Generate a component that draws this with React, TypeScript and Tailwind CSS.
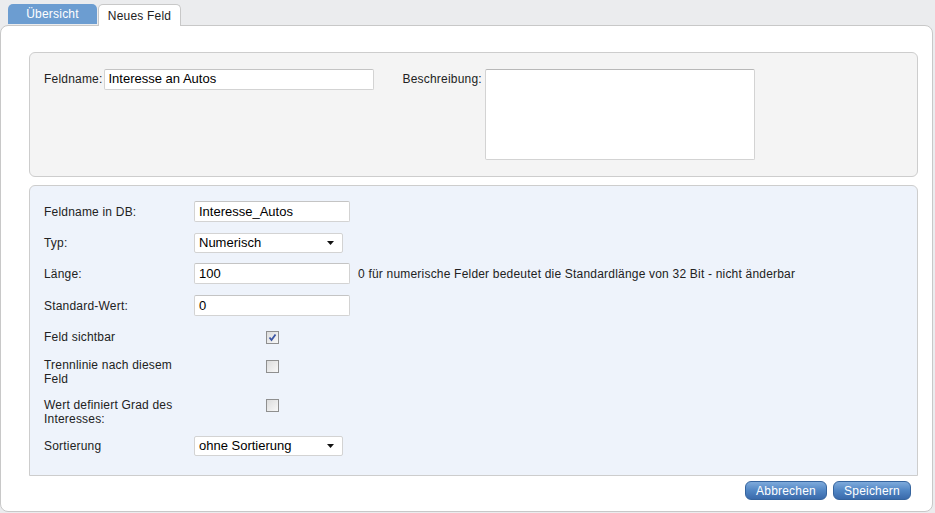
const labelFont = { fontFamily: '"Liberation Sans", Arial, sans-serif' };

function TextInput({ value, w }: { value: string; w: string }) {
  return (
    <div
      className={`${w} h-[21px] flex items-center px-[4px] bg-white border border-[#d3d3d3] border-t-[#c4c4c4] rounded-[2px] text-[13px] tracking-normal text-black`}
    >
      {value}
    </div>
  );
}

function Select({ value }: { value: string }) {
  return (
    <div className="w-[149px] h-[20px] flex items-center justify-between pl-[4px] pr-[8px] bg-white border border-[#d3d3d3] rounded-[2px] text-[13px] tracking-normal text-black">
      <span>{value}</span>
      <svg width="7" height="4" viewBox="0 0 7 4">
        <path d="M0 0h7L3.5 4z" fill="#111" />
      </svg>
    </div>
  );
}

function Checkbox({ checked = false }: { checked?: boolean }) {
  return (
    <div className="w-[13px] h-[13px] border border-[#8f8f8f] bg-gradient-to-br from-[#dcdcdc] to-[#f8f8f8] flex items-center justify-center">
      {checked && (
        <svg width="9" height="9" viewBox="0 0 9 9">
          <path d="M1.5 4.5 L3.5 7 L7.5 1.5" fill="none" stroke="#3b55a4" strokeWidth="1.8" />
        </svg>
      )}
    </div>
  );
}

function Button({ children, w }: { children: string; w: string }) {
  return (
    <button
      className={`${w} h-[19px] rounded-[6px] border border-[#35649e] bg-gradient-to-b from-[#7eaadb] via-[#5186c4] to-[#3a6aab] text-white text-[12px] leading-none flex items-center justify-center`}
    >
      {children}
    </button>
  );
}

export default function App() {
  return (
    <div className="w-[935px] h-[513px] bg-[#ebecee] text-[12px] tracking-[0.2px] text-[#222]" style={labelFont}>
      {/* Tabs */}
      <div className="flex items-end h-[25px] pl-[8px]">
        <div className="w-[89px] h-[20px] mb-[1px] bg-[#6c9dd1] rounded-t-[5px] text-white flex items-center justify-center">
          Übersicht
        </div>
        <div className="relative z-10 w-[83px] h-[22px] -mb-[1px] ml-[1px] bg-white border border-b-0 border-[#c8c8c8] rounded-t-[5px] flex items-center justify-center text-[#222]">
          Neues Feld
        </div>
      </div>

      {/* Main panel */}
      <div className="w-[933px] h-[487px] bg-white border border-[#c8c8c8] rounded-[8px] pt-[26px] px-[28px]">
        {/* Section 1 */}
        <div className="w-[889px] h-[125px] bg-[#f4f4f4] border border-[#cdcdcd] rounded-[6px] pt-[15px] pl-[14px] flex">
          <div className="flex items-center gap-[1px] h-[22px]">
            <span>Feldname:</span>
            <TextInput value="Interesse an Autos" w="w-[270px]" />
          </div>
          <div className="flex items-start ml-[29px] pt-[1px]">
            <span className="mt-[1px] w-[82px]">Beschreibung:</span>
            <div className="w-[270px] h-[91px] bg-white border border-[#d3d3d3] border-t-[#b8b8b8] rounded-[2px]" />
          </div>
        </div>

        {/* Section 2 */}
        <div className="w-[889px] h-[291px] mt-[8px] bg-[#eef3fb] border border-[#cdcdcd] rounded-t-[6px] pt-[15px] pl-[14px]">
          <div className="flex items-center h-[21px]">
            <span className="w-[150px]">Feldname in DB:</span>
            <TextInput value="Interesse_Autos" w="w-[156px]" />
          </div>
          <div className="flex items-center h-[20px] mt-[11px]">
            <span className="w-[150px]">Typ:</span>
            <Select value="Numerisch" />
          </div>
          <div className="flex items-center h-[21px] mt-[10px]">
            <span className="w-[150px]">Länge:</span>
            <TextInput value="100" w="w-[156px]" />
            <span className="ml-[8px]">0 für numerische Felder bedeutet die Standardlänge von 32 Bit - nicht änderbar</span>
          </div>
          <div className="flex items-center h-[21px] mt-[11px]">
            <span className="w-[150px]">Standard-Wert:</span>
            <TextInput value="0" w="w-[156px]" />
          </div>
          <div className="flex items-start mt-[14px] leading-[14px]">
            <span className="w-[150px]">Feld sichtbar</span>
            <div className="w-[156px] flex justify-center pt-[1px]">
              <Checkbox checked />
            </div>
          </div>
          <div className="flex items-start mt-[14px] leading-[14px]">
            <span className="w-[150px] pr-[18px]">Trennlinie nach diesem Feld</span>
            <div className="w-[156px] flex justify-center pt-[2px]">
              <Checkbox />
            </div>
          </div>
          <div className="flex items-start mt-[12px] leading-[14px]">
            <span className="w-[150px] pr-[18px]">Wert definiert Grad des Interesses:</span>
            <div className="w-[156px] flex justify-center pt-[1px]">
              <Checkbox />
            </div>
          </div>
          <div className="flex items-center h-[20px] mt-[10px]">
            <span className="w-[150px]">Sortierung</span>
            <Select value="ohne Sortierung" />
          </div>
        </div>

        {/* Buttons */}
        <div className="flex justify-end gap-[6px] mt-[5px] -mr-[7px]">
          <Button w="w-[82px]">Abbrechen</Button>
          <Button w="w-[78px]">Speichern</Button>
        </div>
      </div>
    </div>
  );
}
